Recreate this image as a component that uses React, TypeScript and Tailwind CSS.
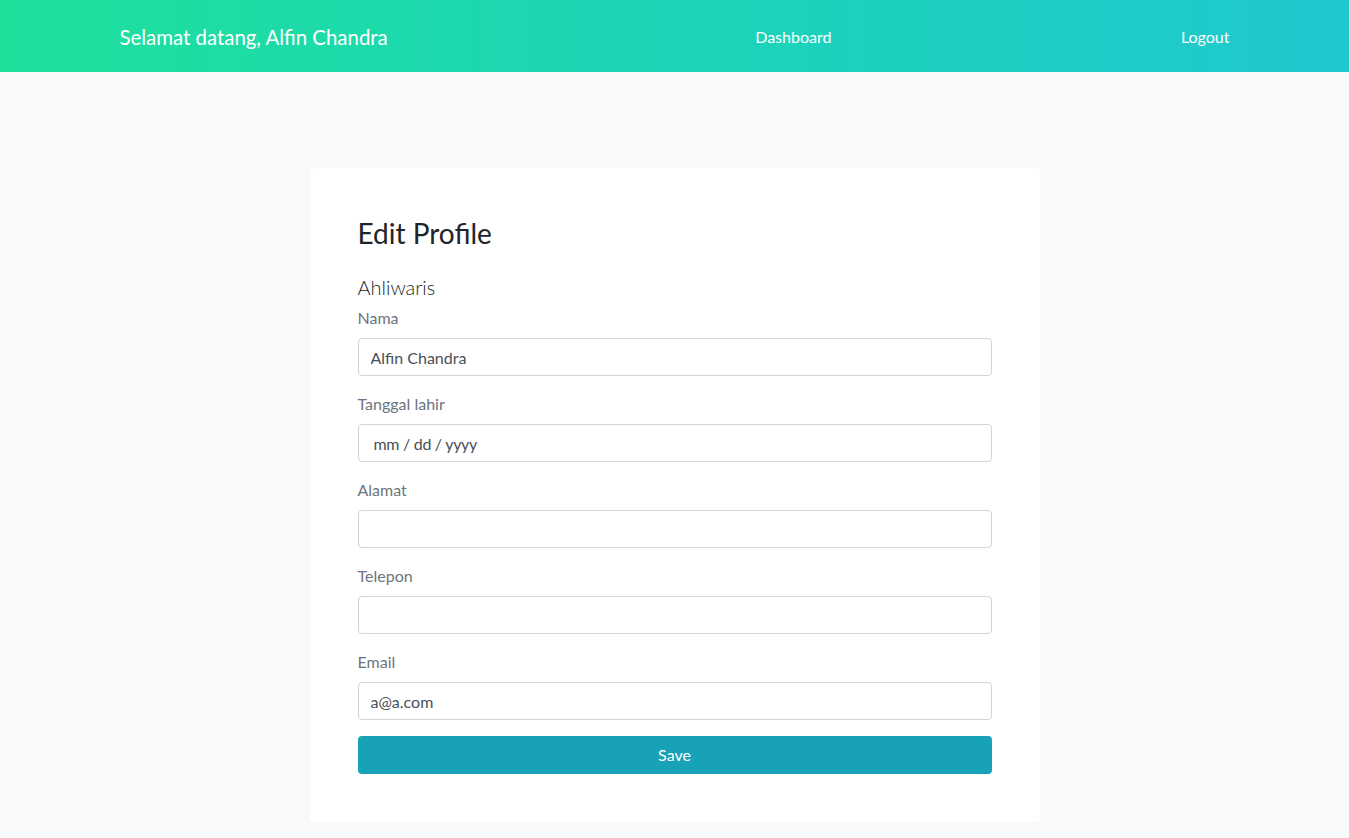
import React, { useState } from "react";

const fields = [
  { key: "nama", label: "Nama", value: "Alfin Chandra", placeholder: "" },
  { key: "lahir", label: "Tanggal lahir", value: "", placeholder: "mm / dd / yyyy" },
  { key: "alamat", label: "Alamat", value: "", placeholder: "" },
  { key: "telepon", label: "Telepon", value: "", placeholder: "" },
  { key: "email", label: "Email", value: "a@a.com", placeholder: "" },
];

const App = () => {
  const [form, setForm] = useState<Record<string, string>>(
    Object.fromEntries(fields.map((f) => [f.key, f.value]))
  );

  return (
    <div
      className="min-h-screen bg-[#f8f9fa] pb-4"
      style={{ fontFamily: "Lato, 'Noto Sans', sans-serif" }}
    >
      <nav className="h-[72px] bg-gradient-to-r from-[#1fe09b] to-[#1fc8cf]">
        <div className="mx-auto flex h-full max-w-[1140px] items-center justify-between px-[15px] pt-[2px] text-white">
          <span className="text-[20.4px]">Selamat datang, Alfin Chandra</span>
          <a href="#" className="ml-[18px] text-[16px]">
            Dashboard
          </a>
          <a href="#" className="text-[16px]">
            Logout
          </a>
        </div>
      </nav>

      <div className="mx-auto mt-24 w-[730px] rounded-[5px] bg-white p-12">
        <h3 className="text-[28px] leading-[34px] text-[#212529]">Edit Profile</h3>
        <h5 className="mt-[25px] mb-[7px] text-[20px] font-light leading-[24px] text-[#212529]">
          Ahliwaris
        </h5>
        {fields.map((f) => (
          <div key={f.key} className="mb-4">
            <label className="mb-2 block text-[16px] leading-[24px] text-[#6c757d]">
              {f.label}
            </label>
            <input
              type="text"
              value={form[f.key]}
              placeholder={f.placeholder}
              onChange={(e) => setForm({ ...form, [f.key]: e.target.value })}
              className={`block h-[38px] w-full rounded-[4px] border border-[#ced4da] bg-white text-[16px] text-[#495057] placeholder:text-[#495057] outline-none ${
                f.placeholder ? "px-[15px] tracking-[-0.3px]" : "px-3"
              }`}
            />
          </div>
        ))}
        <button className="h-[38px] w-full rounded-[4px] bg-[#17a2b8] text-[16px] text-white">
          Save
        </button>
      </div>
    </div>
  );
};

export default App;
